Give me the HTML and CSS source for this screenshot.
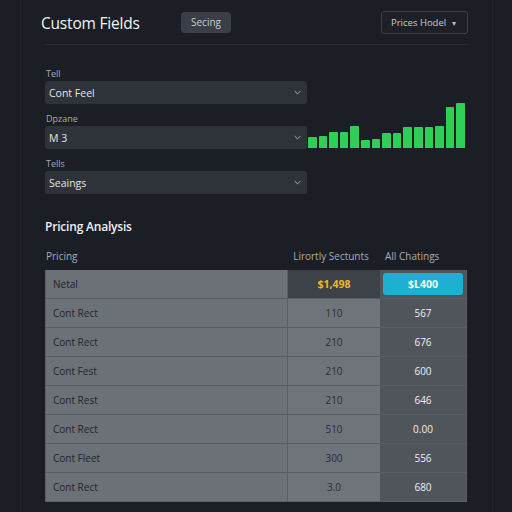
FILE: index.html
```html
<!DOCTYPE html>
<html>
<head>
<meta charset="utf-8">
<link rel="stylesheet" href="styles.css">
</head>
<body>
<div class="page">
  <header class="top">
    <h1 class="title">Custom Fields</h1>
    <span class="badge">Secing</span>
    <button class="menu">Prices Hodel <span class="caret">▾</span></button>
  </header>

  <section class="form-row">
    <div class="fields">
      <div class="field">
        <label class="lbl">Tell</label>
        <div class="select"><span>Cont Feel</span><svg class="chev" viewBox="0 0 10 6"><path d="M1 1l4 4 4-4"/></svg></div>
      </div>
      <div class="field">
        <label class="lbl">Dpzane</label>
        <div class="select"><span>M 3</span><svg class="chev" viewBox="0 0 10 6"><path d="M1 1l4 4 4-4"/></svg></div>
      </div>
      <div class="field">
        <label class="lbl">Tells</label>
        <div class="select"><span>Seaings</span><svg class="chev" viewBox="0 0 10 6"><path d="M1 1l4 4 4-4"/></svg></div>
      </div>
    </div>
    <div class="chart">
      <div class="bar" style="height:11px"></div>
      <div class="bar" style="height:12px"></div>
      <div class="bar" style="height:16px"></div>
      <div class="bar" style="height:16px"></div>
      <div class="bar" style="height:22px"></div>
      <div class="bar" style="height:8px"></div>
      <div class="bar" style="height:9px"></div>
      <div class="bar" style="height:15px"></div>
      <div class="bar" style="height:15px"></div>
      <div class="bar" style="height:21px"></div>
      <div class="bar" style="height:21px"></div>
      <div class="bar" style="height:21px"></div>
      <div class="bar" style="height:22px"></div>
      <div class="bar" style="height:41px"></div>
      <div class="bar" style="height:45px"></div>
    </div>
  </section>

  <h2 class="section-title">Pricing Analysis</h2>

  <div class="thead">
    <span class="th th1">Pricing</span>
    <span class="th th2">Lirortly Sectunts</span>
    <span class="th th3">All Chatings</span>
  </div>

  <div class="table">
    <div class="row first">
      <div class="c1">Netal</div>
      <div class="c2 dark"><span class="gold">$1,498</span></div>
      <div class="c3"><span class="pill">$L400</span></div>
    </div>
    <div class="row"><div class="c1">Cont Rect</div><div class="c2">110</div><div class="c3">567</div></div>
    <div class="row"><div class="c1">Cont Rect</div><div class="c2">210</div><div class="c3">676</div></div>
    <div class="row"><div class="c1">Cont Fest</div><div class="c2">210</div><div class="c3">600</div></div>
    <div class="row"><div class="c1">Cont Rest</div><div class="c2">210</div><div class="c3">646</div></div>
    <div class="row"><div class="c1">Cont Rect</div><div class="c2">510</div><div class="c3">0.00</div></div>
    <div class="row"><div class="c1">Cont Fleet</div><div class="c2">300</div><div class="c3">556</div></div>
    <div class="row last"><div class="c1">Cont Rect</div><div class="c2">3.0</div><div class="c3">680</div></div>
  </div>
</div>
</body>
</html>
```

FILE: styles.css
```css
* { box-sizing: border-box; }
html, body { margin: 0; padding: 0; }
body {
  background: #1b1e25;
  font-family: "Open Sans", "Lato", sans-serif;
  width: 512px;
  height: 512px;
  overflow: hidden;
}
.page {
  margin: 0 19px 0 20px;
  height: 512px;
  border-left: 1px solid #21252c;
  border-right: 1px solid #21252c;
  padding: 0 24px;
}
.top {
  display: flex;
  align-items: center;
  height: 45px;
  border-bottom: 1px solid #262a31;
  padding-top: 1px;
}
.title {
  margin: 0 0 0 -4px;
  font-size: 15.5px;
  font-weight: 500;
  color: #f2f3f5;
  letter-spacing: -0.2px;
  width: 140px;
}
.badge {
  background: #3a3f47;
  color: #c9ccd1;
  font-size: 10px;
  padding: 0 8px;
  height: 21px;
  line-height: 21px;
  border-radius: 4px;
  width: 50px;
  text-align: center;
}
.menu {
  margin-left: auto;
  background: #1d2027;
  border: 1px solid #3b3f47;
  border-radius: 3px;
  height: 23px;
  width: 87px;
  color: #c8cbd0;
  font-family: inherit;
  font-size: 9.5px;
  padding: 0 0 0 9px;
  text-align: left;
  margin-top: -1px;
}
.caret { font-size: 8px; margin-left: 3px; color: #bbb; }

.form-row {
  display: flex;
  align-items: flex-start;
  padding-top: 23px;
}
.fields { width: 262px; display: flex; flex-direction: column; gap: 9px; }
.field { display: flex; flex-direction: column; }
.lbl {
  font-size: 9px;
  line-height: 12px;
  color: #a7abb1;
  margin-left: 1px;
  margin-bottom: 1px;
}
.select {
  height: 23px;
  background: #2e3239;
  border-radius: 3px;
  display: flex;
  align-items: center;
  justify-content: space-between;
  padding: 0 6px 0 4px;
  font-size: 10.5px;
  color: #e4e6ea;
}
.chev { width: 7px; height: 5px; fill: none; stroke: #b9bdc3; stroke-width: 1.3; }
.chart {
  margin-left: 1px;
  width: 157px;
  height: 80px;
  display: flex;
  align-items: flex-end;
  gap: 2px;
}
.bar { flex: 1; background: #2fcf57; border-radius: 1px 1px 0 0; }

.section-title {
  margin: 25px 0 0 0;
  font-size: 12px;
  line-height: 16px;
  font-weight: 600;
  color: #f0f1f3;
  letter-spacing: -0.2px;
}
.thead {
  display: grid;
  grid-template-columns: 242px 92px 88px;
  margin-top: 13px;
  height: 16px;
  line-height: 16px;
  font-size: 10px;
  color: #a9adb3;
}
.th1 { padding-left: 1px; }
.th2 { text-align: center; padding-right: 4px; }
.th3 { padding-left: 6px; }

.table {
  margin-top: 6px;
  border: 1px solid #5b6067;
  border-top: none;
  width: 422px;
}
.row {
  display: grid;
  grid-template-columns: 242px 92px 1fr;
  height: 29px;
  border-bottom: 1px solid #585c63;
  font-size: 10px;
}
.row.last { border-bottom: none; height: 28px; }
.c1, .c2, .c3 { display: flex; align-items: center; }
.c1 {
  background: #6c7077;
  color: #23262b;
  padding-left: 7px;
  border-right: 1px solid #5a5e65;
}
.c2 {
  background: #6f737a;
  color: #2b2e33;
  justify-content: center;
}
.c2.dark { background: #3d4249; }
.c3 {
  background: #50555c;
  color: #eef0f2;
  justify-content: center;
}
.gold { color: #f2b526; font-weight: 700; font-size: 10.5px; }
.pill {
  background: #1eb0d2;
  color: #f4fbfd;
  font-weight: 700;
  font-size: 10.5px;
  width: 80px;
  height: 22px;
  border-radius: 3px;
  display: flex;
  align-items: center;
  justify-content: center;
}
```
